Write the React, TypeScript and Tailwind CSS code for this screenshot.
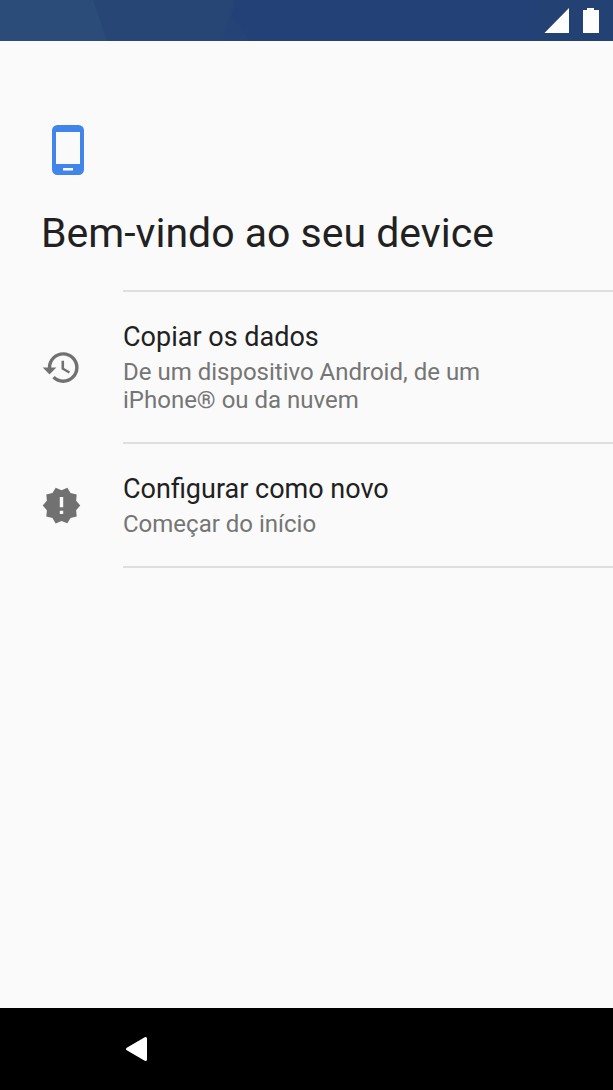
import type { ReactNode } from "react";
import { MdHistory, MdNewReleases } from "react-icons/md";

interface SetupOptionProps {
  icon: ReactNode;
  title: string;
  description: string;
}

const StatusBar = () => (
  <header className="relative flex h-[41px] items-center justify-end bg-[#234176]">
    {/* Wallpaper facets */}
    <svg
      className="absolute inset-y-0 left-0 h-full w-[250px]"
      viewBox="0 0 250 41"
      preserveAspectRatio="none"
      aria-hidden="true"
    >
      <path d="M0 0H235L226 41H0Z" fill="#274676" />
      <path d="M235 0L229 14L250 41H222Z" fill="#254376" />
      <path d="M0 0H93L107 41H0Z" fill="#2b4c79" />
    </svg>
    {/* Signal and battery */}
    <svg className="h-[41px] w-[72px]" viewBox="0 0 72 41" aria-hidden="true">
      <path d="M0 0H72V41H0Z" fill="#234172" />
      <path d="M28 8V33H3.500Z" fill="#fff" />
      <path d="M46 8h7v2h5v23H42V10h4Z" fill="#fff" />
    </svg>
  </header>
);

const PhoneIcon = () => (
  <svg width="32" height="50" viewBox="0 0 32 50" aria-hidden="true">
    <path
      fill="#4285ea"
      fillRule="evenodd"
      d="M5.500 0h21A5.500 5.500 0 0 1 32 5.500v39a5.500 5.500 0 0 1-5.500 5.500h-21A5.500 5.500 0 0 1 0 44.500v-39A5.500 5.500 0 0 1 5.500 0ZM4 7v32h24V7ZM11 43v2.500h10V43Z"
    />
  </svg>
);

const SetupOption = ({ icon, title, description }: SetupOptionProps) => (
  <li>
    <button type="button" className="flex w-full items-center pl-[41px] text-left">
      <span className="w-[82px] shrink-0 pb-[2px] text-[#717171]">{icon}</span>
      <span className="flex-1 border-b-2 border-[#dfdfdf] pt-[29px] pr-[80px] pb-[28px]">
        <span className="block text-[27px] leading-8 text-[#212121]">{title}</span>
        <span className="mt-[5px] block text-[24px] leading-7 text-[#757575]">
          {description}
        </span>
      </span>
    </button>
  </li>
);

const App = () => {
  return (
    <div className="flex min-h-screen flex-col bg-[#fafafa] font-['Roboto',sans-serif]">
      <StatusBar />

      <main className="flex-1 pt-[84px]">
        <div className="pl-[52px]">
          <PhoneIcon />
        </div>
        <h1 className="mt-[34px] px-[41px] text-[41px] leading-[48px] text-[#212121]">
          Bem-vindo ao seu device
        </h1>

        <div className="mt-[33px] ml-[123px] h-[2px] bg-[#dfdfdf]" />
        <ul>
          <SetupOption
            icon={<MdHistory size={41} />}
            title="Copiar os dados"
            description="De um dispositivo Android, de um iPhone® ou da nuvem"
          />
          <SetupOption
            icon={<MdNewReleases size={41} />}
            title="Configurar como novo"
            description="Começar do início"
          />
        </ul>
      </main>

      {/* Navigation bar */}
      <nav className="flex h-[82px] items-center bg-black pl-[125px]">
        <button type="button" aria-label="Voltar">
          <svg width="23" height="26" viewBox="0 0 23 26" aria-hidden="true">
            <path
              d="M2.500 13L20.500 2.500V23.500Z"
              fill="#fff"
              stroke="#fff"
              strokeWidth="3"
              strokeLinejoin="round"
            />
          </svg>
        </button>
      </nav>
    </div>
  );
};

export default App;
